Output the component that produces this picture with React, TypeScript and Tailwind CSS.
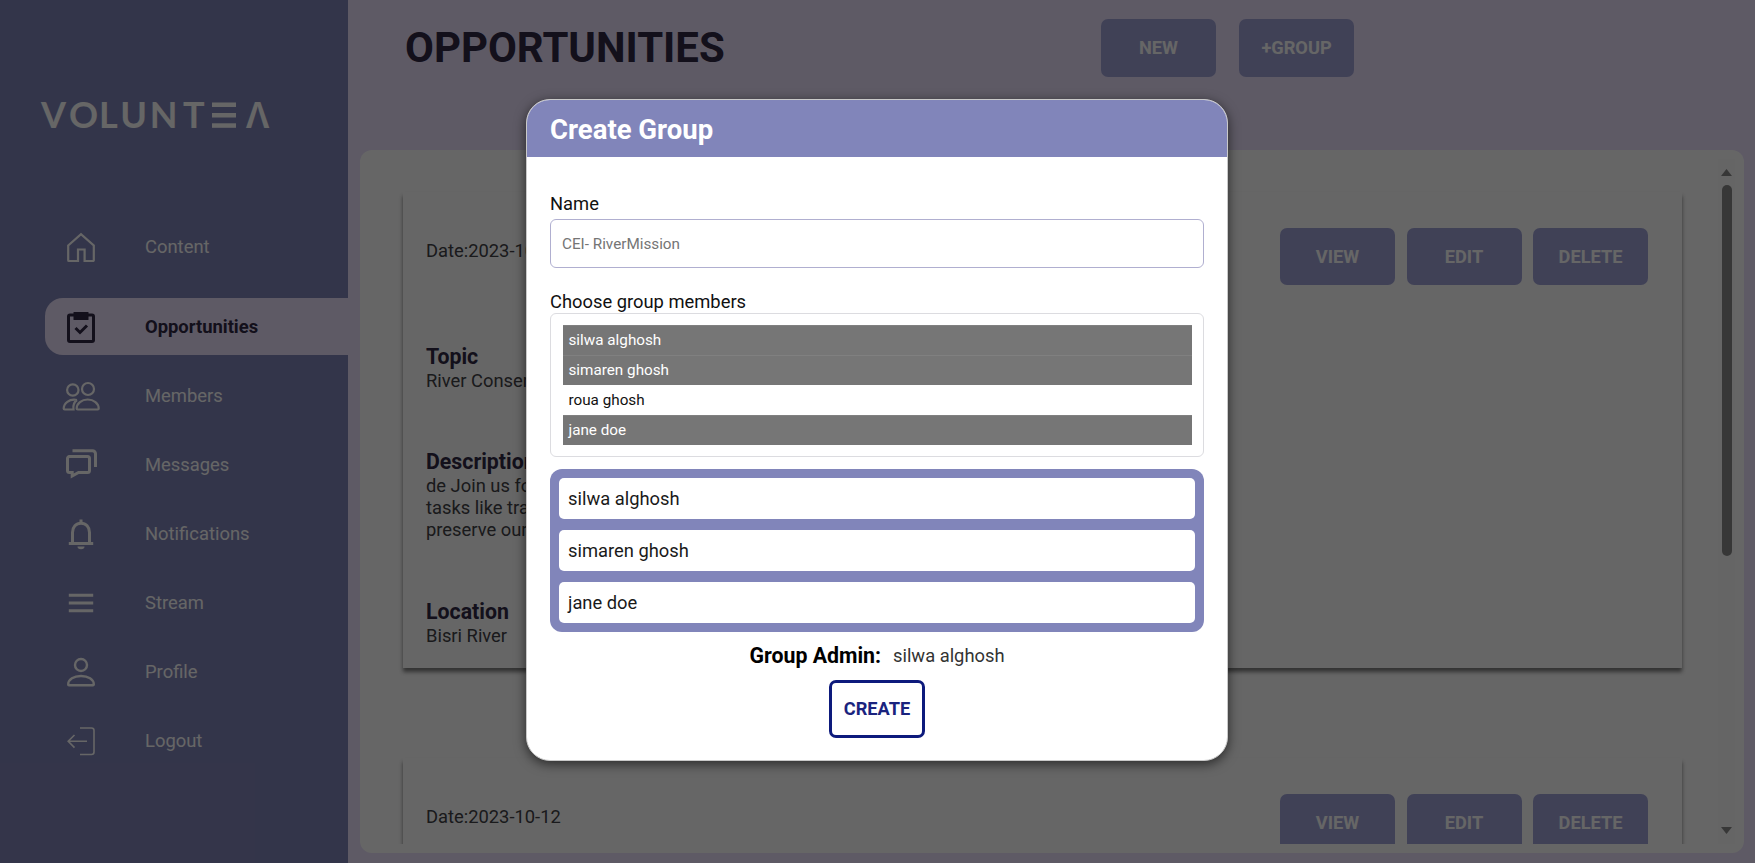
import React from "react";

const people = ["silwa alghosh", "simaren ghosh", "roua ghosh", "jane doe"];
const chosen = ["silwa alghosh", "simaren ghosh", "jane doe"];

function Logo() {
  return (
    <svg width="240" height="34" viewBox="40 97 240 34" className="ml-10 block fill-white" aria-label="Voluntea">
      <text y="127.500" x="41 69 99 120.300 149.800 183" className="font-[Lato,sans-serif] text-[36px] font-bold">VOLUNT</text>
      <rect x="212" y="102.5" width="24" height="4.5" />
      <rect x="212" y="113" width="24" height="4.5" />
      <rect x="212" y="123.3" width="24" height="4.5" />
      <text y="127.500" x="246" className="font-['Noto_Sans',sans-serif] text-[36px] font-semibold">Λ</text>
    </svg>
  );
}

const icons: Record<string, React.ReactNode> = {
  Content: <path d="M3.2 14.5 16 3.2 28.800 14.500V29.2a.8.8 0 0 1-.8.8H19.600V18.500H13v11.500H4a.8.8 0 0 1-.8-.8Z" strokeWidth="2.2" />,
  Opportunities: (
    <>
      <rect x="3.500" y="4" width="25" height="26.500" rx="1.500" strokeWidth="3" />
      <rect x="8.500" y="1" width="15" height="8" rx=".5" fill="currentColor" stroke="none" />
      <path d="m10.500 17 4.500 4.500 7-7" strokeWidth="3" />
    </>
  ),
  Members: (
    <>
      <circle cx="7.800" cy="10" r="5.700" strokeWidth="2.200" />
      <circle cx="23" cy="9" r="6" strokeWidth="2.200" />
      <path d="M12.700 29.500a1 1 0 0 1-1-1c0-5 5-9 11-9s11 4 11 9a1 1 0 0 1-1 1Z" strokeWidth="2.200" />
      <path d="M12 20C4 18.500-1.300 23.500-1.300 28.500a1 1 0 0 0 1 1H8.500C8 26 9 22 12 20" strokeWidth="2.200" />
    </>
  ),
  Messages: (
    <>
      <path d="M3.500 7.500H22.500a2 2 0 0 1 2 2V21.500a2 2 0 0 1-2 2H13.500L7.200 27V23.500H4.500a2 2 0 0 1-2-2V9.500a2 2 0 0 1 2-2Z" strokeWidth="3" />
      <path d="M7.500 1.800H27.500a3 3 0 0 1 3 3V18" strokeWidth="3" />
    </>
  ),
  Notifications: (
    <>
      <path d="M7.500 25.500V14.500C7.500 9 11 5.200 16 5.200s8.500 3.800 8.500 9.300V25.500" strokeWidth="3" />
      <path d="M3.800 25.500H28.200M16 5.500V1.500" strokeWidth="3" />
      <path d="M12.500 28.500h7a3.500 2.700 0 0 1-7 0Z" fill="currentColor" stroke="none" />
    </>
  ),
  Stream: <path d="M3.800 8.300H28.200M3.800 16H28.200M3.800 23.700H28.200" strokeWidth="3" />,
  Profile: (
    <>
      <circle cx="16" cy="9" r="6" strokeWidth="2.400" />
      <path d="M4 29.200a.8.8 0 0 1-.8-.8c0-5 5.700-8.400 12.800-8.400s12.800 3.400 12.800 8.400a.8.8 0 0 1-.8.8Z" strokeWidth="2.400" />
    </>
  ),
  Logout: (
    <>
      <path d="M15 3H26.500a2.500 2.500 0 0 1 2.500 2.500V27a2.500 2.500 0 0 1-2.500 2.500H15" strokeWidth="1.600" />
      <path d="M22 16.300H3.200M9.500 10 3.200 16.300l6.300 6.300" strokeWidth="1.600" />
    </>
  ),
};

function NavItem({ label, active }: { label: string; active?: boolean }) {
  return (
    <a
      className={
        active
          ? "ml-[45px] mt-[11px] flex h-[57px] items-center rounded-l-[18px] bg-[#ebe1fd] pl-5 text-[18.400px] font-bold text-[#302845]"
          : "ml-[45px] flex h-[57px] items-center pl-5 text-[18.400px] text-white"
      }
    >
      <svg width="32" height="32" viewBox="0 0 32 32" fill="none" stroke="currentColor" className="overflow-visible">
        {icons[label]}
      </svg>
      <span className="ml-12 pt-px">{label}</span>
    </a>
  );
}

function Btn({ children, tall }: { children: React.ReactNode; tall?: boolean }) {
  return (
    <button className={`${tall ? "h-[58px]" : "h-[57px]"} w-[115px] shrink-0 rounded-[7px] bg-[#a0a3d8] text-[18.200px] font-bold text-white`}>
      {children}
    </button>
  );
}

function Card({ date }: { date: string }) {
  return (
    <article className="relative h-[476px] shrink-0 bg-white pt-9 pr-6 pl-[23px] text-[18.350px] leading-[22px] text-[#424246] shadow-[0_4px_4px_rgba(0,0,0,0.5)]">
      <div className="flex justify-between pr-[10px]">
        <p className="mt-[12px]">Date:{date}</p>
        <div className="flex gap-[11.500px]">
          <Btn>VIEW</Btn>
          <Btn>EDIT</Btn>
          <Btn>DELETE</Btn>
        </div>
      </div>
      <h2 className="mt-[58.500px] text-[21.300px] leading-[26px] font-bold text-[#302845]">Topic</h2>
      <p>River Conservation</p>
      <h2 className="mt-[57px] text-[21.300px] leading-[26px] font-bold text-[#302845]">Description</h2>
      <p>de Join us for a river cleanup, with</p>
      <p>tasks like trash collection to help</p>
      <p>preserve our rivers</p>
      <h2 className="mt-[58px] text-[21.300px] leading-[26px] font-bold text-[#302845]">Location</h2>
      <p>Bisri River</p>
    </article>
  );
}

function GroupDialog() {
  return (
    <div className="flex h-[662px] w-[702px] flex-col overflow-hidden rounded-[24px] border border-[#c9c9c9] bg-white text-[18.350px] shadow-[0_3px_12px_rgba(0,0,0,0.6)]">
      <header className="flex h-[57px] shrink-0 items-center bg-[#8185ba] pt-[2px] pl-[23px] text-[27.500px] font-bold text-white">Create Group</header>
      <div className="flex flex-col px-[23px] pt-[36px] text-[#111]">
        <label className="leading-[22px]">Name</label>
        <input
          className="mt-[4px] h-[49px] rounded-[6px] border-[1.500px] border-[#b0afd0] px-[11px] text-[15.250px] placeholder:text-[#757575]"
          placeholder="CEI- RiverMission"
        />
        <label className="mt-[23px] leading-[22px]">Choose group members</label>
        <div className="h-[144px] rounded-[6px] border border-[#dcdce0] px-[11.500px] py-[11px] text-[15.250px]">
          {people.map((p) => (
            <div
              key={p}
              className={
                chosen.includes(p)
                  ? "flex h-[30px] items-center border-t border-[#808080] bg-[#767676] pl-[6px] text-white"
                  : "flex h-[30px] items-center pl-[6px]"
              }
            >
              {p}
            </div>
          ))}
        </div>
        <div className="mt-3 flex h-[163px] flex-col gap-[11px] rounded-[12px] bg-[#8185ba] p-[9px]">
          {chosen.map((p) => (
            <div key={p} className="flex flex-1 items-center rounded-[5px] bg-white pl-[9px] text-[#1a1a1a]">
              {p}
            </div>
          ))}
        </div>
        <p className="mt-3 flex h-6 items-center justify-center gap-3">
          <b className="text-[21.300px] font-bold text-black">Group Admin:</b>
          <span className="text-[#333]">silwa alghosh</span>
        </p>
        <button className="mt-[12px] h-[58px] w-[96px] self-center rounded-[7px] border-[3px] border-[#0d1a7c] text-[18.200px] font-bold text-[#1a237e]">
          CREATE
        </button>
      </div>
    </div>
  );
}

export default function App() {
  return (
    <div className="relative flex h-[863px] w-[1755px] overflow-hidden bg-[#ebe1fd] font-[Roboto,sans-serif]">
      <aside className="flex w-[347.500px] shrink-0 flex-col bg-[#8185ba] pt-[97px]">
        <Logo />
        <nav className="mt-[87px] flex flex-col gap-3">
          <NavItem label="Content" />
          <NavItem label="Opportunities" active />
          <NavItem label="Members" />
          <NavItem label="Messages" />
          <NavItem label="Notifications" />
          <NavItem label="Stream" />
          <NavItem label="Profile" />
          <NavItem label="Logout" />
        </nav>
      </aside>
      <main className="flex min-w-0 flex-1 flex-col pr-[11px] pb-[10px] pl-3">
        <div className="flex h-[150px] shrink-0 items-start pt-[19px] pl-[45.500px]">
          <h1 className="w-[696px] text-[41.900px] leading-[58px] font-bold text-[#302845]">OPPORTUNITIES</h1>
          <div className="flex gap-[23px]">
            <Btn tall>NEW</Btn>
            <Btn tall>+GROUP</Btn>
          </div>
        </div>
        <section className="flex min-h-0 flex-1 rounded-[12px] bg-white p-[9px]">
          <div className="flex min-w-0 flex-1 flex-col gap-[90px] overflow-hidden pt-[33px] pr-[36px] pl-[34.500px]">
            <Card date="2023-10-12" />
            <Card date="2023-10-12" />
          </div>
          <div className="flex w-[17px] flex-col items-center bg-[#fcfcfc] py-[10px]">
            <svg width="11" height="7" viewBox="0 0 11 7" className="fill-[#8a8a8a]"><path d="M5.500 0 11 7H0Z" /></svg>
            <div className="mt-[9px] h-[371px] w-[10px] rounded-full bg-[#8b8b8b]" />
            <svg width="11" height="7" viewBox="0 0 11 7" className="mt-auto fill-[#8a8a8a]"><path d="M0 0H11L5.500 7Z" /></svg>
          </div>
        </section>
      </main>
      <div className="absolute inset-0 flex items-start justify-center bg-black/60 pt-[99px] pr-px">
        <GroupDialog />
      </div>
    </div>
  );
}
